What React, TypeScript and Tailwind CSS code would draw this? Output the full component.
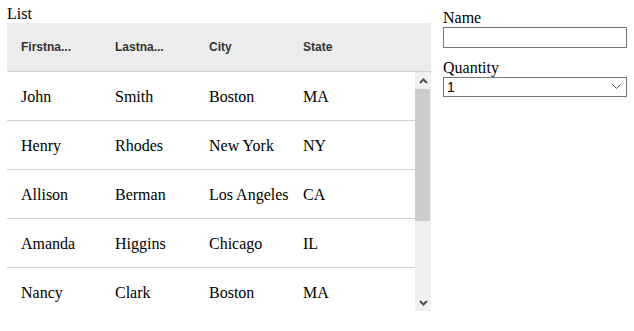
import React from "react";

const rows = [
  ["John", "Smith", "Boston", "MA"],
  ["Henry", "Rhodes", "New York", "NY"],
  ["Allison", "Berman", "Los Angeles", "CA"],
  ["Amanda", "Higgins", "Chicago", "IL"],
  ["Nancy", "Clark", "Boston", "MA"],
];

const headers = ["Firstna...", "Lastna...", "City", "State"];

export default function App() {
  return (
    <div className="flex w-[634px] h-[331px] bg-white" style={{ fontFamily: '"Liberation Serif", serif' }}>
      <div className="flex flex-col pl-[7px] pt-[5px] w-[431px]">
        <div className="text-[16px] leading-[18px] text-black">List</div>
        <div className="w-[424px] flex flex-col">
          <div
            className="flex h-[49px] items-center bg-[#ececec] border-b border-[#d2d2d2] text-[12px] font-bold text-[#333333]"
            style={{ fontFamily: '"Liberation Sans", Arial, sans-serif' }}
          >
            {headers.map((h) => (
              <div key={h} className="w-[94px] pl-[14px] whitespace-nowrap">
                {h}
              </div>
            ))}
          </div>
          <div className="flex h-[239px]">
            <div className="w-[408px] overflow-hidden">
              {rows.map((r, i) => (
                <div key={i} className="flex h-[49px] pt-[2px] items-center border-b border-[#d0d0d0] text-[16px] text-black">
                  {r.map((c, j) => (
                    <div key={j} className="w-[94px] pl-[14px] whitespace-nowrap">
                      {c}
                    </div>
                  ))}
                </div>
              ))}
            </div>
            <div className="w-[16px] bg-[#f0f0f0] flex flex-col">
              <div className="h-[17px] flex items-center justify-center">
                <svg width="9" height="6" viewBox="0 0 9 6">
                  <path d="M1 5 L4.5 1.5 L8 5" fill="none" stroke="#505050" strokeWidth="2" />
                </svg>
              </div>
              <div className="h-[132px] w-[15px] bg-[#cdcdcd]" />
              <div className="flex-1" />
              <div className="h-[17px] flex items-center justify-center">
                <svg width="9" height="6" viewBox="0 0 9 6">
                  <path d="M1 1 L4.5 4.5 L8 1" fill="none" stroke="#505050" strokeWidth="2" />
                </svg>
              </div>
            </div>
          </div>
        </div>
      </div>
      <div className="flex flex-col pl-[12px] pt-[9px] w-[196px]">
        <label className="text-[16px] leading-[18px] text-black">Name</label>
        <input
          className="h-[21px] w-[184px] border border-[#767676] px-[2px] text-[13px] outline-none"
          style={{ fontFamily: '"Liberation Sans", Arial, sans-serif' }}
        />
        <label className="mt-[11px] text-[16px] leading-[18px] text-black">Quantity</label>
        <div
          className="relative h-[20px] w-[184px] border border-[#767676] flex items-center pl-[3px] text-[14px] text-black"
          style={{ fontFamily: '"Liberation Sans", Arial, sans-serif' }}
        >
          1
          <svg className="absolute right-[5px] top-[6px]" width="9" height="6" viewBox="0 0 9 6">
            <path d="M0.5 0.5 L4.5 4.5 L8.5 0.5" fill="none" stroke="#555" strokeWidth="1" />
          </svg>
        </div>
      </div>
    </div>
  );
}
